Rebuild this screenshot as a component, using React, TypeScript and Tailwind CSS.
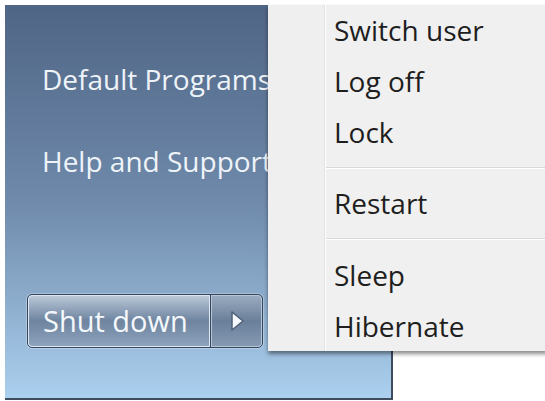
import React from "react"

const font = { fontFamily: '"Open Sans", "Noto Sans", sans-serif' }

function MenuItem({ label }: { label: string }) {
    return (
        <div className="h-[51px] flex items-center pl-[8px] text-[28px] text-[#1e1e1e] whitespace-nowrap">
            {label}
        </div>
    )
}

function Separator() {
    return (
        <div className="h-[21px] flex flex-col justify-center">
            <div className="h-px bg-[#d9d9d9]" />
            <div className="h-px bg-white" />
        </div>
    )
}

export default function App() {
    return (
        <div className="w-[545px] h-[401px] bg-white relative overflow-hidden" style={font}>
            {/* start menu right pane */}
            <div className="absolute left-[5px] top-[5px] w-[388px] h-[395px] border-r-2 border-b-2 border-[#3e4c5e] bg-gradient-to-b from-[#4f6585] via-[#6f8aab] to-[#acd0ef] flex flex-col">
                <div className="pt-[53px] pl-[37px] flex flex-col gap-[40px] text-[28px] text-[#eef3f8] whitespace-nowrap">
                    <div>Default Programs</div>
                    <div>Help and Support</div>
                </div>

                <div className="mt-[112px] ml-[22px] flex w-[236px] h-[54px] rounded-[5px] border border-[#34465e] overflow-hidden shadow-[0_0_0_1px_rgba(255,255,255,0.25)]">
                    <div className="w-[182px] flex items-center pl-[14px] border border-[#dfe8f2] rounded-l-[4px] bg-gradient-to-b from-[#bac7d7] via-[#6e849f] to-[#8ea3bc] text-[29px] text-[#f4f8fc] whitespace-nowrap">
                        Shut down
                    </div>
                    <div className="w-px bg-[#34465e]" />
                    <div className="flex-1 flex items-center justify-center border border-[#b8c6d6] rounded-r-[4px] bg-gradient-to-b from-[#9aabc0] via-[#6a7f9a] to-[#8599b2]">
                        <svg width={16} height={24} viewBox="0 0 16 24" className="block shrink-0">
                            <path d="M3 3 L14 12 L3 21 Z" fill="#f4f7fb" stroke="#4f6078" strokeWidth="1.5" strokeLinejoin="round" />
                        </svg>
                    </div>
                </div>
            </div>

            {/* shut down options menu */}
            <div className="absolute left-[268px] top-[5px] w-[280px] h-[346px] bg-[#f0f0f0] flex shadow-[0_3px_4px_rgba(0,0,0,0.45)]">
                <div className="w-[57px] bg-[#efefef] border-r border-[#e2e2e2]" />
                <div className="w-px bg-white" />
                <div className="flex-1 flex flex-col">
                    <MenuItem label="Switch user" />
                    <MenuItem label="Log off" />
                    <MenuItem label="Lock" />
                    <Separator />
                    <MenuItem label="Restart" />
                    <Separator />
                    <MenuItem label="Sleep" />
                    <MenuItem label="Hibernate" />
                </div>
            </div>
        </div>
    )
}
